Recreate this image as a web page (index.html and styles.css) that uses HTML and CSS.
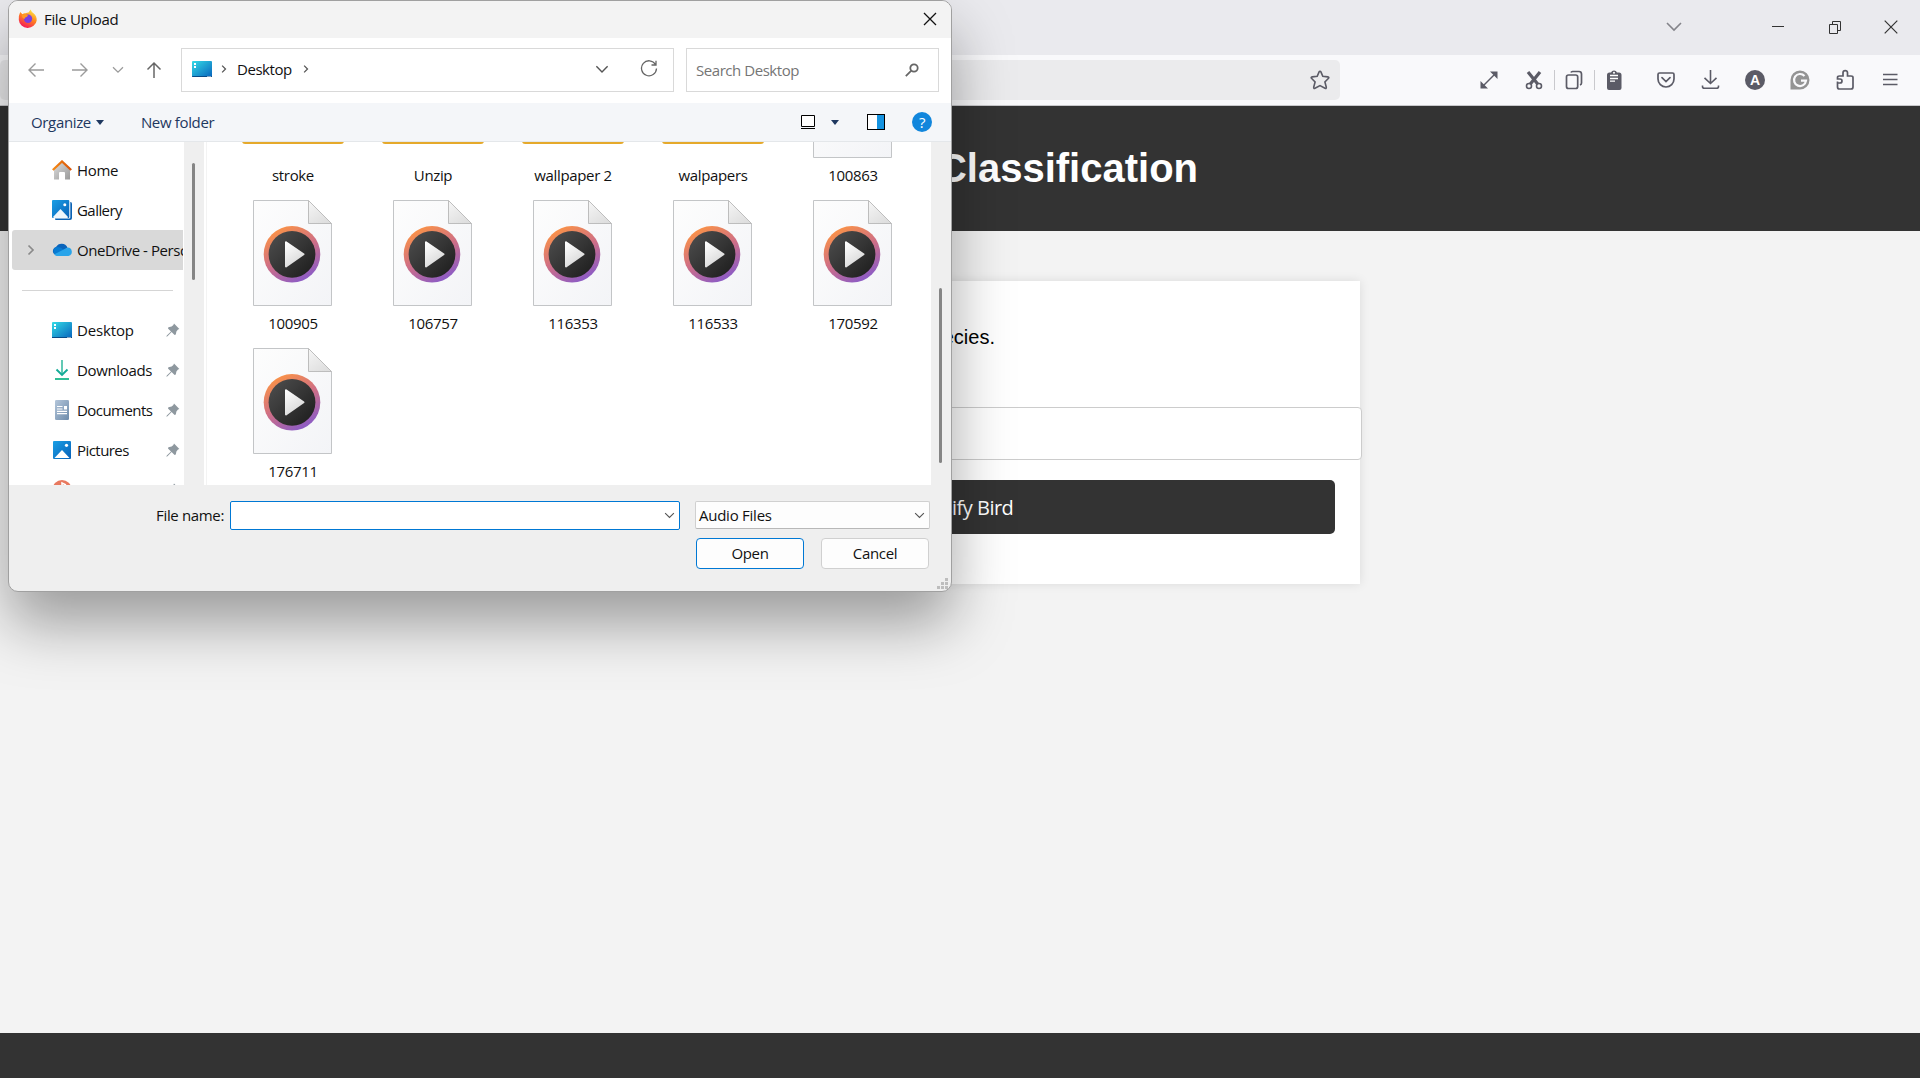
FILE: index.html
```html
<!DOCTYPE html>
<html lang="en">
<head>
<meta charset="utf-8">
<title>File Upload</title>
<link rel="stylesheet" href="styles.css">
</head>
<body>
<svg class="defs" width="0" height="0">
  <defs>
    <linearGradient id="page" x1="0" y1="0" x2="1" y2="1"><stop offset="0" stop-color="#fdfdfd"/><stop offset="1" stop-color="#f3f4f7"/></linearGradient>
    <linearGradient id="fold" x1="0" y1="0" x2=".7" y2="1"><stop offset="0" stop-color="#f6f6f6"/><stop offset="1" stop-color="#dedede"/></linearGradient>
    <linearGradient id="ring" x1=".2" y1="0" x2=".75" y2="1"><stop offset="0" stop-color="#ff9640"/><stop offset=".5" stop-color="#cf6f85"/><stop offset="1" stop-color="#8559cc"/></linearGradient>
    <linearGradient id="disc" x1="0" y1="0" x2="1" y2="1"><stop offset="0" stop-color="#505050"/><stop offset="1" stop-color="#1b1b1b"/></linearGradient>
    <linearGradient id="tri" x1="0" y1="0" x2=".5" y2="1"><stop offset="0" stop-color="#fff"/><stop offset="1" stop-color="#d9d9d9"/></linearGradient>
    <linearGradient id="desk" x1="0" y1="0" x2="1" y2="1"><stop offset="0" stop-color="#33dbe6"/><stop offset="1" stop-color="#0864bd"/></linearGradient>
    <linearGradient id="blue" x1="0" y1="0" x2="1" y2="1"><stop offset="0" stop-color="#1a9fe5"/><stop offset="1" stop-color="#0760b8"/></linearGradient>
    <linearGradient id="roof" x1="0" y1="0" x2="1" y2="0"><stop offset="0" stop-color="#f58a16"/><stop offset="1" stop-color="#d95308"/></linearGradient>
    <linearGradient id="wall" x1="0" y1="0" x2="1" y2="1"><stop offset="0" stop-color="#ddd"/><stop offset="1" stop-color="#999"/></linearGradient>
    <linearGradient id="doc" x1="0" y1="0" x2="1" y2="1"><stop offset="0" stop-color="#b4c6da"/><stop offset="1" stop-color="#6d8bab"/></linearGradient>
    <linearGradient id="fox" x1=".8" y1="0" x2=".3" y2="1"><stop offset="0" stop-color="#fff04a"/><stop offset=".45" stop-color="#ff8a1e"/><stop offset="1" stop-color="#f4145c"/></linearGradient>
    <symbol id="media" viewBox="0 0 79 106">
      <path d="M.5.5H55.500L78.500 23.500V105.500H.5Z" fill="url(#page)" stroke="#c3c5c7"/>
      <path d="M55.500.5V23.500H78.500Z" fill="url(#fold)" stroke="#bdbdbd"/>
      <circle cx="39" cy="54.300" r="28.300" fill="url(#ring)"/><circle cx="39" cy="54.300" r="23.400" fill="url(#disc)"/>
      <path d="M33 42.200L50.500 54.300L33 66.500Z" fill="url(#tri)" stroke="url(#tri)" stroke-width="2" stroke-linejoin="round"/>
    </symbol>
    <symbol id="desktop" viewBox="0 0 20 16"><rect width="20" height="16" rx="1" fill="url(#desk)"/><path d="M0 15H20V15.200A.8.8 0 0 1 19.200 16H.8A.8.8 0 0 1 0 15.200Z" fill="#084a86"/><path d="M2 2h2v2H2zM2 5h2v2H2zM15.500 15h1v1h-1zM17.500 15h1v1h-1z" fill="#fff"/></symbol>
    <symbol id="pin" viewBox="0 0 14 14"><path d="M8 .6L13.400 6L12 6.600L10.400 8.400L9.800 11.600L8.600 12L5.600 9L1.500 13.200L.3 13.700L.8 12.500L5 8.400L2 5.400L2.400 4.200L5.600 3.600L7.400 2Z" fill="#8e989f"/></symbol>
    <symbol id="down" viewBox="0 0 12 8"><path d="M1 1.200L6 6.200L11 1.200" fill="none" stroke="currentColor" stroke-width="1.250"/></symbol>
    <symbol id="next" viewBox="0 0 8 12"><path d="M1.500 1.500L6 6L1.500 10.500" fill="none" stroke="currentColor" stroke-width="1.700"/></symbol>
  </defs>
</svg>

<div class="screen">
  <div class="titlebar">
    <svg class="t-list" width="18" height="12"><path d="M2 2L9 9L16 2" fill="none" stroke="#84848a" stroke-width="1.600"/></svg>
    <svg class="t-min" width="14" height="14"><path d="M1 6.500H13" stroke="#333"/></svg>
    <svg class="t-max" width="14" height="14"><path d="M1.500 4.500h8v9h-8zM4.500 4.500v-3h8v9h-3" fill="none" stroke="#333"/></svg>
    <svg width="14" height="14"><path d="M.7.700L13.300 13.300M13.300.700L.7 13.300" stroke="#333" stroke-width="1.200"/></svg>
  </div>
  <div class="navbar">
    <div class="urlbar"><svg width="20" height="20" viewBox="0 0 20 20"><path d="M10 1.200Q10.600 1.200 10.900 1.900L12.800 6.300L17.800 6.900Q19.600 7.200 18.300 8.500L14.900 12L16.300 17.200Q16.500 18.900 15 18.300L10 15.600L5 18.300Q3.500 18.900 3.700 17.200L5.100 12L1.700 8.500Q.4 7.200 2.200 6.900L7.200 6.300L9.100 1.900Q9.400 1.200 10 1.200Z" fill="none" stroke="#5b5b66" stroke-width="1.600"/></svg></div>
    <div class="tools">
      <svg class="gap-m" viewBox="0 0 24 24"><path d="M6 18L18 6" stroke="#5b5b66" stroke-width="1.500"/><path d="M13 3.500h7.500V11zM3.500 13v7.500H11z" fill="#5b5b66"/></svg>
      <svg viewBox="0 0 24 24"><path d="M6 4L16.500 17M18 4L7.500 17" stroke="#5b5b66" stroke-width="3.200"/><circle cx="7" cy="18" r="2.500" fill="#f9f9fb" stroke="#5b5b66" stroke-width="1.600"/><circle cx="17" cy="18" r="2.500" fill="#f9f9fb" stroke="#5b5b66" stroke-width="1.600"/></svg>
      <i class="sep"></i>
      <svg viewBox="0 0 24 24"><path d="M9 4.500Q9.300 3.500 10.500 3.500H17Q19.500 3.500 19.500 6V15Q19.500 16.500 18 17" fill="none" stroke="#5b5b66" stroke-width="1.700"/><rect x="4.500" y="7" width="11.200" height="13.500" rx="2" fill="none" stroke="#5b5b66" stroke-width="1.700"/></svg>
      <i class="sep"></i>
      <svg class="gap-l" viewBox="0 0 24 24"><path d="M7.500 4.500H9a3.200 3.200 0 0 1 6 0H17a2.500 2.500 0 0 1 2.500 2.500V20a2 2 0 0 1-2 2H7a2 2 0 0 1-2-2V7a2.500 2.500 0 0 1 2.500-2.500Z" fill="#5b5b66"/><circle cx="12" cy="4.800" r="1" fill="#fff"/><path d="M8 7.500h8M8 10.500h8M8 13.200h5" stroke="#fff" stroke-width="1.300"/></svg>
      <svg class="gap-s" viewBox="0 0 24 24"><path d="M5.500 5H18.500Q20 5 20 6.500V11A8 8 0 0 1 4 11V6.500Q4 5 5.500 5Z" fill="none" stroke="#5b5b66" stroke-width="1.700"/><path d="M8 9.700L12 13.500L16 9.700" fill="none" stroke="#5b5b66" stroke-width="1.700" stroke-linecap="round"/></svg>
      <svg class="gap-m" viewBox="0 0 24 24"><path d="M12.500 2V15M6.500 9.800L12.500 15.500L18.500 9.800M4.500 17.500V18.500Q4.500 20.300 6.500 20.300H18.500Q20.500 20.300 20.500 18.500V17.500" fill="none" stroke="#5b5b66" stroke-width="1.600"/></svg>
      <b class="account">A</b>
      <svg class="gap-m" viewBox="0 0 24 24"><path d="M12 2.500A9.500 9.500 0 1 1 12 21.500H2.500V12A9.500 9.500 0 0 1 12 2.500Z" fill="#949494"/><path d="M16.500 8A6 6 0 1 0 18 12.700H13" fill="none" stroke="#f9f9fb" stroke-width="2.200"/></svg>
      <svg class="gap-m" viewBox="0 0 24 24"><path d="M4.500 13.500V19Q4.500 21 6.500 21H18Q20 21 20 19V9.500Q20 8 18 8H14.500V4.800A2 2 0 0 0 10 4.800V8H6.500Q4.500 8 4.500 9.500V11H7A2 2 0 0 1 7 15H4.500Z" fill="none" stroke="#5b5b66" stroke-width="1.700"/></svg>
      <svg viewBox="0 0 24 24"><path d="M5 6.500H19.500M5 11.500H19.500M5 16.500H19.500" stroke="#5b5b66" stroke-width="1.500"/></svg>
    </div>
  </div>
  <header class="banner"><h1>Classification</h1></header>
  <main class="content">
    <form class="card">
      <p>species.</p>
      <div class="file-field"></div>
      <div class="submit">Classify Bird</div>
    </form>
  </main>
  <footer class="page-footer"></footer>
</div>

<section class="dialog">
  <div class="d-title">
    <svg width="20" height="20" viewBox="0 0 20 20"><path d="M2.200 3L4.500 5.200Q6 4 7.500 4.300Q9 3.500 10.500 3.400Q11.500 2 12.500.5Q13.500 3 15.500 4.200Q19 7 18.700 11.500A9 8.500 0 0 1 .8 11Q.6 6 2.200 3Z" fill="url(#fox)"/><circle cx="10" cy="9.800" r="4.200" fill="#7b3fe0"/><path d="M3.500 6.500Q6.500 4.500 10 6.200L9 7.800Q6.800 8 6.500 10Q4.500 9.500 3.500 6.500Z" fill="#ff9a22"/></svg>
    <span>File Upload</span>
    <svg class="d-close" width="14" height="14"><path d="M1 1L13 13M13 1L1 13" stroke="#111" stroke-width="1.300"/></svg>
  </div>
  <div class="d-nav">
    <div class="arrows">
      <svg width="18" height="16"><path d="M17 8H2M8.500 1.500L2 8L8.500 14.500" fill="none" stroke="#9b9b9b" stroke-width="1.400"/></svg>
      <svg class="fwd" width="18" height="16"><path d="M1 8H16M9.500 1.500L16 8L9.500 14.500" fill="none" stroke="#9b9b9b" stroke-width="1.400"/></svg>
      <svg class="recent" width="12" height="8"><use href="#down"/></svg>
      <svg class="up" width="16" height="18"><path d="M8 17V2M1.500 8.500L8 2L14.500 8.500" fill="none" stroke="#666" stroke-width="1.500"/></svg>
    </div>
    <div class="address">
      <svg width="20" height="16"><use href="#desktop"/></svg>
      <svg class="crumb" width="6" height="10"><use href="#next"/></svg>
      <span>Desktop</span>
      <svg class="crumb2" width="6" height="10"><use href="#next"/></svg>
      <svg class="drop" width="14" height="9"><use href="#down"/></svg>
      <svg width="18" height="18" viewBox="0 0 18 18"><path d="M15.500 4.500A7.500 7.500 0 1 0 16.500 8.500M16 .8V5H11.500" fill="none" stroke="#666" stroke-width="1.300"/></svg>
    </div>
    <div class="search"><span>Search Desktop</span><svg width="14" height="14"><circle cx="9" cy="5" r="3.700" fill="none" stroke="#666" stroke-width="1.800"/><path d="M6.300 7.700L.8 13.200" stroke="#666" stroke-width="1.800"/></svg></div>
  </div>
  <div class="d-tools">
    <span>Organize</span><i class="caret"></i><span class="t-new">New folder</span>
    <svg class="view" width="14" height="14"><path d="M.5.5h13v11H.5z" fill="#fff" stroke="#000"/><path d="M0 13.500H14" stroke="#000"/></svg>
    <i class="caret far"></i>
    <svg class="preview" width="18" height="16"><rect x=".5" y=".5" width="17" height="15" fill="#fff" stroke="#000"/><path d="M10 1h7v14h-7z" fill="#1593e0"/></svg>
    <b class="help">?</b>
  </div>
  <div class="d-body">
    <div class="tree">
      <div class="row"><svg viewBox="0 0 20 20"><path d="M2 8L10 2L18 8V19.500H13V13Q13 12 12 12H8Q7 12 7 13V19.500H2Z" fill="url(#wall)"/><path d="M.8 10L10 1.500L19.200 10" fill="none" stroke="url(#roof)" stroke-width="2.300"/></svg><span>Home</span></div>
      <div class="row"><svg viewBox="0 0 20 20"><path d="M4 2H18.500Q20 2 20 4V18Q20 20 18 20H4Q3 20 3 19Z" fill="#0b62b4"/><rect width="18.300" height="18.500" rx="1" fill="#fff"/><rect width="17.300" height="18" rx="1" fill="url(#blue)"/><path d="M1 17L8.500 9L16 17Q16 18 15 18H2Z" fill="#eef6fc"/><circle cx="12.800" cy="4.800" r="1.500" fill="#fff"/></svg><span class="tight">Gallery</span></div>
      <div class="row selected"><svg class="expand" viewBox="0 0 8 12"><use href="#next"/></svg><svg viewBox="0 0 20 20"><path d="M2 14A4.200 4.200 0 0 1 4 7A6.400 6.400 0 0 1 15.500 7.500L11 11Z" fill="#0a64bb"/><path d="M3.800 7.200Q8 6 12 10L5 15.500A4.500 4.500 0 0 1 3.800 7.200Z" fill="#087bd2"/><path d="M5 15.900Q3.500 15.800 2 14.600L15.500 7.600A4.200 4.200 0 0 1 16.500 15.900Z" fill="#28a4ea"/></svg><span>OneDrive - Personal</span></div>
      <div class="rule"></div>
      <div class="row"><svg viewBox="0 -2 20 20"><rect width="20" height="16" rx="1" fill="url(#desk)"/><path d="M0 15H20V16H0Z" fill="#084a86"/><path d="M2 2h2v2H2zM2 5h2v2H2zM15.500 15h1v1h-1zM17.500 15h1v1h-1z" fill="#fff"/></svg><span class="wide">Desktop</span><svg class="pin"><use href="#pin"/></svg></div>
      <div class="row"><svg viewBox="0 0 20 20"><path d="M9.300 0H10.700V15H9.300Z" fill="#20b295"/><path d="M4.500 9.500L10 15L15.500 9.500" fill="none" stroke="#13ab97" stroke-width="1.900"/><path d="M3 19H17" stroke="#26bb91" stroke-width="1.900"/></svg><span>Downloads</span><svg class="pin"><use href="#pin"/></svg></div>
      <div class="row"><svg viewBox="0 0 20 20"><rect x="3" width="14" height="20" rx="1.300" fill="url(#doc)"/><path d="M5 6.500h5.500M5 9h5.500M5 11.300h10M5 13.600h10" stroke="#fff" stroke-width="1.200"/><path d="M12 6h3v3.500h-3z" fill="#fff"/></svg><span class="tight">Documents</span><svg class="pin"><use href="#pin"/></svg></div>
      <div class="row"><svg viewBox="0 0 20 20"><rect x="1" y="1" width="18" height="18" rx="1" fill="url(#blue)"/><path d="M2.500 18L10 10L17.500 18Z" fill="#fff"/><circle cx="14.500" cy="5.300" r="1.600" fill="#fff"/></svg><span class="tight">Pictures</span><svg class="pin"><use href="#pin"/></svg></div>
      <div class="row"><svg viewBox="0 0 20 20"><circle cx="10" cy="9.500" r="9.500" fill="#e8795f"/><path d="M10 13V3L14 5" stroke="#fff" stroke-width="1.500" fill="none"/></svg><svg class="pin"><use href="#pin"/></svg></div>
    </div>
    <div class="scroll left"><i></i></div>
    <div class="files">
      <div class="grid">
        <div class="item"><div class="folder"></div><span>stroke</span></div>
        <div class="item"><div class="folder"></div><span>Unzip</span></div>
        <div class="item"><div class="folder"></div><span>wallpaper 2</span></div>
        <div class="item"><div class="folder"></div><span>walpapers</span></div>
        <div class="item"><svg><use href="#media"/></svg><span>100863</span></div>
        <div class="item"><svg><use href="#media"/></svg><span>100905</span></div>
        <div class="item"><svg><use href="#media"/></svg><span>106757</span></div>
        <div class="item"><svg><use href="#media"/></svg><span>116353</span></div>
        <div class="item"><svg><use href="#media"/></svg><span>116533</span></div>
        <div class="item"><svg><use href="#media"/></svg><span>170592</span></div>
        <div class="item"><svg><use href="#media"/></svg><span>176711</span></div>
      </div>
    </div>
    <div class="scroll right"><i></i></div>
  </div>
  <div class="d-foot">
    <div class="line">
      <label>File name:</label>
      <div class="name-field"><svg width="11" height="7"><use href="#down"/></svg></div>
      <div class="type-field"><span>Audio Files</span><svg width="11" height="7"><use href="#down"/></svg></div>
    </div>
    <div class="buttons"><div class="btn primary">Open</div><div class="btn">Cancel</div></div>
    <svg class="grip" width="11" height="11"><path d="M8 0h3v3H8zM4 4h3v3H4zM8 4h3v3H8zM0 8h3v3H0zM4 8h3v3H4zM8 8h3v3H8z" fill="#bdbdbd"/></svg>
  </div>
</section>
</body>
</html>
```
FILE: styles.css
```css
* { box-sizing: border-box; }
body { margin: 0; width: 1920px; height: 1080px; overflow: hidden; position: relative; background: #fff; font-family: "Liberation Sans", Arial, sans-serif; }
svg { display: block; flex: none; }
.defs { position: absolute; }

.screen { display: flex; flex-direction: column; height: 1078px; background: #f3f3f3; }
.titlebar { height: 55px; background: #eaeaee; display: flex; align-items: center; justify-content: flex-end; padding: 0 22px 1px 0; }
.t-list { margin-right: 88px; }
.t-min { margin-right: 43px; }
.t-max { margin-right: 42px; }
.navbar { height: 51px; background: #f9f9fb; border-bottom: 1px solid #c8c8cb; display: flex; align-items: center; justify-content: space-between; padding-right: 18px; }
.urlbar { width: 1340px; height: 40px; border-radius: 5px; background: #ebebed; display: flex; align-items: center; justify-content: flex-end; padding-right: 10px; }
.tools { display: flex; align-items: center; }
.tools svg { width: 24px; height: 24px; }
.tools .gap-s { margin-right: 20px; }
.tools .gap-m { margin-right: 21px; }
.tools .gap-l { margin-right: 28px; }
.sep { width: 1px; height: 20px; background: #c9c9cd; margin: 0 7px 0 8px; }
.account { width: 20px; height: 20px; border-radius: 50%; background: #5b5b66; color: #fff; font-size: 14px; line-height: 20px; text-align: center; margin-left: 2px; margin-right: 23px; }
.banner { height: 125px; background: #333; display: flex; align-items: center; justify-content: flex-end; padding: 0 722px 2px 0; }
.banner h1 { margin: 0; color: #fff; font-size: 40px; line-height: 46px; }
.content { flex: 1; padding-top: 50px; }
.card { width: 800px; height: 303px; margin: 0 auto; background: #fff; box-shadow: 0 0 10px rgba(0,0,0,.1); padding: 45px 25px 0; }
.card p { margin: 0; width: 410px; text-align: right; font-size: 20px; line-height: 23px; }
.file-field { width: 777px; height: 53px; margin-top: 58px; border: 1px solid #ccc; border-radius: 4px; background: #fff; }
.submit { height: 54px; margin-top: 20px; border-radius: 5px; background: #333; color: #fff; font: 20px/55px "Open Sans", "Noto Sans", sans-serif; letter-spacing: -.5px; text-align: center; }
.page-footer { height: 45px; background: #333; }

.dialog { position: absolute; left: 8px; top: 0; width: 944px; height: 592px; border: 1px solid #a0a0a0; border-radius: 10px; background: #efefef; overflow: hidden; display: flex; flex-direction: column; box-shadow: 0 32px 60px rgba(0,0,0,.36); font: 15px/20px "Open Sans", "Noto Sans", sans-serif; letter-spacing: -.35px; color: #111; }
.d-title { height: 37px; background: #f3f3f3; display: flex; align-items: center; padding: 0 14px 1px 9px; }
.d-title span { margin-left: 6px; }
.d-close { margin-left: auto; }
.d-nav { height: 65px; background: #fff; display: flex; align-items: center; padding: 0 12px 1px 18px; }
.arrows { width: 154px; display: flex; align-items: center; }
.arrows, .arrows svg { color: #9b9b9b; }
.fwd { margin-left: 26px; }
.recent { margin-left: 23px; }
.up { margin-left: 22px; }
.address { width: 493px; height: 44px; border: 1px solid #d9d9d9; display: flex; align-items: center; padding: 0 15px 2px 10px; color: #555; }
.address span { color: #111; letter-spacing: -.45px; }
.crumb { margin: 0 10px 0 9px; }
.crumb2 { margin-left: 11px; }
.drop { margin: 0 31px 0 auto; }
.search { width: 253px; height: 44px; margin-left: 12px; border: 1px solid #d9d9d9; display: flex; align-items: center; justify-content: space-between; padding: 0 19px 1px 9px; color: #757575; letter-spacing: -.45px; }
.d-tools { height: 39px; background: #f4f6f9; border-bottom: 1px solid #e4e7ea; display: flex; align-items: center; padding: 0 19px 0 22px; color: #1e3860; }
.caret { border: 4px solid transparent; border-top: 5px solid #1e3860; border-bottom: 0; margin: 0 0 0 5px; }
.t-new { margin-left: 37px; }
.view { margin-left: auto; }
.far { margin-left: 16px; }
.preview { margin: 0 27px 0 28px; }
.help { width: 20px; height: 20px; border-radius: 50%; background: #1186dc; color: #fff; font-weight: 400; text-align: center; }
.d-body { height: 343px; display: flex; }
.tree { width: 175px; height: 343px; overflow: hidden; background: #fff; padding-top: 8px; }
.row { height: 40px; display: flex; align-items: center; margin: 0 1px 0 3px; padding-left: 40px; overflow: hidden; white-space: nowrap; }
.row svg { width: 20px; height: 20px; margin-right: 5px; }
.row .pin { width: 14px; height: 14px; margin: 0 3px 0 auto; }
.tight { letter-spacing: -.55px; }
.wide { letter-spacing: -.15px; }
.selected { background: #d9d9d9; border-radius: 3px 0 0 3px; padding-left: 15px; }
.selected span { letter-spacing: -.42px; }
.row .expand { width: 8px; height: 12px; margin-right: 17px; color: #8a8a8a; }
.rule { height: 1px; background: #d5d5d5; margin: 20px 11px 19px 13px; }
.scroll { width: 20px; background: #efefef; }
.scroll i { display: block; width: 3px; border-radius: 2px; background: #858585; }
.left i { height: 117px; margin: 21px 0 0 8px; }
.right i { height: 175px; margin: 146px 0 0 8px; }
.files { width: 727px; height: 343px; overflow: hidden; background: #fff; padding-left: 2px; }
.grid { border-left: 1px solid #f3f3f3; display: grid; grid-template-columns: repeat(5, 140px); grid-auto-rows: 148px; margin-top: -90px; padding-left: 15px; min-height: 440px; }
.item { display: flex; flex-direction: column; align-items: center; }
.item svg { width: 79px; height: 106px; }
.item span { margin-top: 7px; padding-left: 2px; }
.folder { width: 102px; height: 92px; margin: 0 0 14px 1px; background: #e5a92b; border-radius: 3px; }
.d-foot { height: 106px; padding: 16px 20px 0 0; position: relative; }
.line { display: flex; height: 29px; }
.line label { width: 215px; text-align: right; line-height: 28px; }
.name-field { width: 450px; height: 29px; margin-left: 6px; border: 1px solid #0078d4; border-radius: 2px; background: #fff; display: flex; align-items: center; justify-content: flex-end; padding-right: 4px; color: #555; }
.type-field { width: 235px; height: 28px; margin-left: 15px; border: 1px solid #d0d0d0; border-bottom-color: #b8b8b8; border-radius: 2px; background: #fdfdfd; display: flex; align-items: center; justify-content: space-between; padding: 0 4px 0 3px; color: #555; }
.type-field span { color: #111; letter-spacing: -.25px; }
.buttons { display: flex; justify-content: flex-end; gap: 17px; margin: 8px 2px 0 0; }
.btn { width: 108px; height: 31px; border: 1px solid #d0d0d0; border-radius: 4px; background: #fdfdfd; text-align: center; line-height: 29px; }
.primary { border-color: #0078d4; }
.grip { position: absolute; right: 3px; bottom: 2px; }
```
